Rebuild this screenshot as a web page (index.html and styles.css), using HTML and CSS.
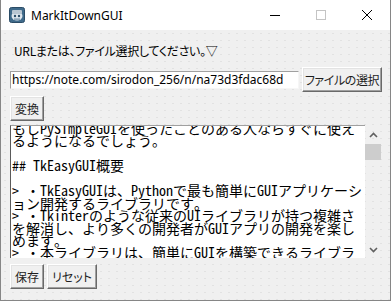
FILE: index.html
```html
<!DOCTYPE html>
<html lang="ja">
  <head>
    <meta charset="utf-8" />
    <title>MarkItDownGUI</title>
    <link rel="stylesheet" href="styles.css">
  </head>
  <body>
    <div class="window">
      <div class="titlebar">
        <svg class="app-icon" width="16" height="16" viewBox="0 0 16 16">
          <rect x="0.5" y="0.5" width="15" height="15" rx="2" fill="#3f6a8a" stroke="#2b4c66" />
          <ellipse cx="8" cy="9" rx="5.5" ry="4.5" fill="#dfe6ec" />
          <rect x="3" y="3" width="10" height="4" rx="1" fill="#b9c6d1" />
          <circle cx="6" cy="9" r="1.2" fill="#2b4c66" />
          <circle cx="10" cy="9" r="1.2" fill="#2b4c66" />
          <rect x="5" y="11.5" width="6" height="1.2" fill="#6c8aa3" />
        </svg>
        <span class="title">MarkItDownGUI</span>
        <div class="controls">
          <span class="ctl ctl-min"><svg width="10" height="10" viewBox="0 0 10 10"><path d="M0 5.5H10" stroke="#000" /></svg></span>
          <span class="ctl ctl-max"><svg width="10" height="10" viewBox="0 0 10 10"><rect x="0.5" y="0.5" width="9" height="9" fill="none" stroke="#c4c4c4" /></svg></span>
          <span class="ctl ctl-close"><svg width="10" height="10" viewBox="0 0 10 10"><path d="M0 0L10 10M10 0L0 10" stroke="#000" /></svg></span>
        </div>
      </div>

      <div class="client">
        <p class="prompt">URLまたは、ファイル選択してください。▽</p>

        <div class="row">
          <div class="entry">https://note.com/sirodon_256/n/na73d3fdac68d</div>
          <button class="btn btn-wide">ファイルの選択</button>
        </div>

        <div class="row">
          <button class="btn">変換</button>
        </div>

        <div class="editor">
          <div class="editor-text">
<pre class="doc">もしPySimpleGUIを使ったことのある人ならすぐに使え
るようになるでしょう。

## TkEasyGUI概要

&gt; ・TkEasyGUIは、Pythonで最も簡単にGUIアプリケーシ
ョン開発するライブラリです。
&gt; ・Tkinterのような従来のUIライブラリが持つ複雑さ
を解消し、より多くの開発者がGUIアプリの開発を楽し
めます。
&gt; ・本ライブラリは、簡単にGUIを構築できるライブラ</pre>
          </div>
          <div class="vscroll">
            <svg class="arrow" width="9" height="6" viewBox="0 0 9 6"><path d="M1 5L4.5 1.5L8 5" fill="none" stroke="#606060" stroke-width="1.6" /></svg>
            <div class="track"><div class="thumb"></div></div>
            <svg class="arrow" width="9" height="6" viewBox="0 0 9 6"><path d="M1 1L4.5 4.5L8 1" fill="none" stroke="#606060" stroke-width="1.6" /></svg>
          </div>
        </div>

        <div class="row row-bottom">
          <button class="btn">保存</button>
          <button class="btn">リセット</button>
        </div>
      </div>
    </div>
  </body>
</html>
```

FILE: styles.css
```css
html,
body {
  margin: 0;
  padding: 0;
  background: #f0f0f0;
}
.window {
  width: 391px;
  height: 301px;
  box-sizing: border-box;
  border: 1px solid #868686;
  border-top: none;
  background-color: #f0f0f0;
  font-family: "Noto Sans CJK JP", "Noto Sans", sans-serif;
  color: #000;
  overflow: hidden;
}
.titlebar {
  height: 30px;
  background: #fff;
  display: flex;
  align-items: center;
}
.app-icon {
  margin-left: 8px;
  margin-right: 6px;
}
.title {
  font-family: "Noto Sans", "Open Sans", sans-serif;
  font-size: 12px;
  color: #000;
}
.controls {
  margin-left: auto;
  display: flex;
  height: 100%;
}
.ctl {
  width: 46px;
  display: flex;
  align-items: center;
  justify-content: center;
}
.client {
  height: 270px;
  padding: 13px 8px 0 9px;
  background-image: radial-gradient(circle, #e2e2e2 0.7px, transparent 0.9px);
  background-size: 8px 7px;
}
.prompt {
  margin: 0 0 8px 4px;
  font-size: 12px;
  line-height: 16px;
  font-feature-settings: "palt";
  letter-spacing: -0.3px;
}
.row {
  display: flex;
  align-items: center;
  gap: 3px;
  margin-bottom: 4px;
}
.entry {
  width: 289px;
  height: 18px;
  box-sizing: border-box;
  background: #fff;
  border: 1px solid;
  border-color: #a0a0a0 #f6f6f6 #f6f6f6 #a0a0a0;
  font-family: "Noto Sans", "Open Sans", sans-serif;
  font-size: 12px;
  line-height: 16px;
  padding-left: 1px;
  white-space: nowrap;
  overflow: hidden;
}
.btn {
  height: 25px;
  box-sizing: border-box;
  padding: 0 4px;
  background: #f0f0f0;
  border: 1px solid;
  border-color: #fff #696969 #696969 #fff;
  box-shadow: inset -1px -1px 0 #a0a0a0, inset 1px 1px 0 #e3e3e3;
  font-family: "Noto Sans CJK JP", sans-serif;
  font-size: 12px;
  font-feature-settings: "palt";
  color: #1e1e1e;
  white-space: nowrap;
}
.btn-wide {
  width: 80px;
  padding: 0;
  letter-spacing: -0.4px;
}
.editor {
  display: flex;
  height: 133px;
  margin-bottom: 6px;
}
.editor-text {
  width: 355px;
  box-sizing: border-box;
  background: #fff;
  border-top: 1px solid #a0a0a0;
  border-left: 1px solid #5a5a5a;
  overflow: hidden;
}
.doc {
  margin: -4px 0 0 1px;
  font-family: "Noto Sans Mono CJK JP", "Noto Sans CJK JP", monospace;
  font-size: 14px;
  line-height: 12.44px;
}
.vscroll {
  width: 16px;
  display: flex;
  flex-direction: column;
  align-items: center;
}
.arrow {
  margin: 7px 0 4px;
}
.track {
  flex: 1;
  width: 100%;
}
.thumb {
  height: 16px;
  margin-top: 2px;
  background: #cdcdcd;
}
.vscroll .arrow:last-child {
  margin: 0 0 5px;
}
```
